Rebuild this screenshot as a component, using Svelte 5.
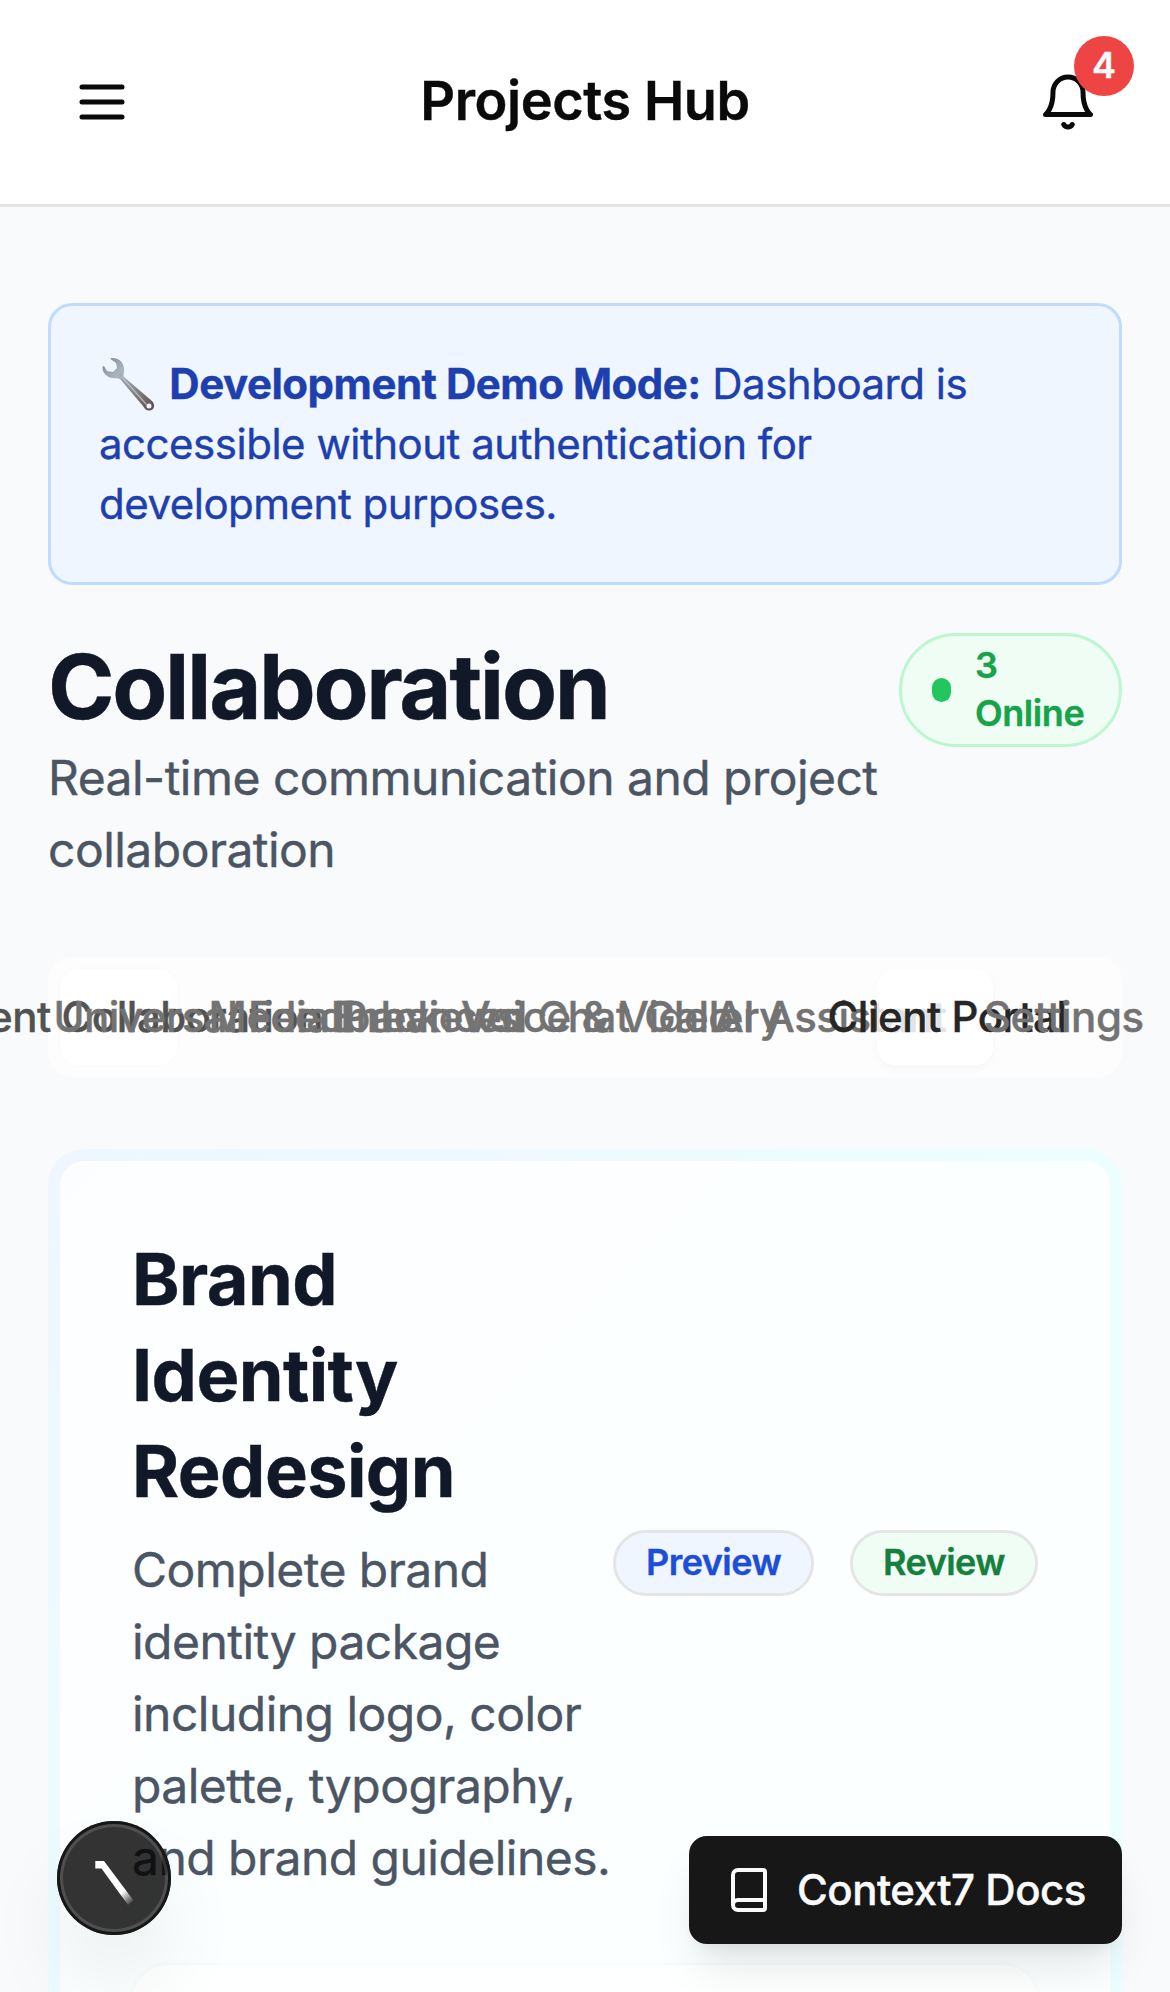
<script>
  const tabs = [
    { label: 'Client Collaboration', state: 'fading' },
    { label: 'Universal Feedback' },
    { label: 'Media Previews' },
    { label: 'Enhanced Chat' },
    { label: 'Voice & Video' },
    { label: 'Gallery' },
    { label: 'AI Assistant' },
    { label: 'Client Portal', state: 'active' },
    { label: 'Settings' },
  ];
</script>

<div class="app">
  <header>
    <button class="icon-btn" aria-label="Menu">
      <svg viewBox="0 0 24 24"><path d="M4 6h16M4 12h16M4 18h16" /></svg>
    </button>
    <h1>Projects Hub</h1>
    <button class="icon-btn" aria-label="Notifications">
      <svg viewBox="0 0 24 24">
        <path d="M6 8a6 6 0 0 1 12 0c0 7 3 9 3 9H3s3-2 3-9" />
        <path d="M10.3 21a1.94 1.94 0 0 0 3.4 0" />
      </svg>
      <span class="count">4</span>
    </button>
  </header>

  <main>
    <section class="notice">
      <svg class="wrench" viewBox="0 0 54 54">
        <defs>
          <linearGradient id="steel" x1="0" y1="0" x2="1" y2="1">
            <stop offset="0" stop-color="#78858f" />
            <stop offset=".3" stop-color="#a9b6bf" />
            <stop offset=".65" stop-color="#827f83" />
            <stop offset="1" stop-color="#5b4a4b" />
          </linearGradient>
        </defs>
        <path
          fill="url(#steel)"
          fill-rule="evenodd"
          d="M9 1C17 0 23 6 22 14C21.700 17 21 18 22 20L50 44C54 48 52 54 47 53.500C44 53.500 43 52 41 49L18 22C16 20.500 14 22 10 21C4 20 0 15 .5 9.500L2 9L5 14L11 15L15 11L14 6L8.500 2ZM47 46.500A2.500 2.500 0 1 0 47 51.500A2.500 2.500 0 1 0 47 46.500Z"
        />
        <path d="M20 20L44 47" stroke="#c3ccd1" stroke-width="1.600" opacity=".7" />
      </svg>
      <strong>Development Demo Mode:</strong> Dashboard is accessible without authentication for
      development purposes.
    </section>

    <section class="intro">
      <div class="intro-text">
        <h2>Collaboration</h2>
        <p>Real-time communication and project collaboration</p>
      </div>
      <div class="online"><i></i><span>3 Online</span></div>
    </section>

    <nav>
      {#each tabs as tab}
        <button class="tab {tab.state ?? ''}"><span>{tab.label}</span></button>
      {/each}
    </nav>

    <section class="card">
      <div class="card-body">
        <div class="project">
          <div class="project-text">
            <h3>Brand Identity Redesign</h3>
            <p>
              Complete brand identity package including logo, color palette, typography, and brand
              guidelines.
            </p>
          </div>
          <div class="badges">
            <span class="badge blue">Preview</span>
            <span class="badge green">Review</span>
          </div>
        </div>
        <div class="panel"></div>
      </div>
    </section>
  </main>

  <div class="dev">
    <svg viewBox="0 0 114 114">
      <defs>
        <linearGradient id="slash" gradientUnits="userSpaceOnUse" x1="56" y1="62" x2="74" y2="84">
          <stop offset="0" stop-color="#fff" />
          <stop offset=".45" stop-color="#fff" />
          <stop offset="1" stop-color="#fff" stop-opacity="0" />
        </linearGradient>
      </defs>
      <path fill="url(#slash)" d="M38.300 40H47L76.500 79.500L71 84L44.500 47.500H38.300Z" />
    </svg>
  </div>

  <button class="docs">
    <svg viewBox="0 0 24 24">
      <path
        d="M4 19.500v-15A2.500 2.500 0 0 1 6.500 2H19a1 1 0 0 1 1 1v18a1 1 0 0 1-1 1H6.500a1 1 0 0 1 0-5H20"
      />
    </svg>
    Context7 Docs
  </button>
</div>

<style>
  :global(body) {
    margin: 0;
  }
  .app,
  .app * {
    box-sizing: border-box;
  }
  .app {
    position: relative;
    height: 1992px;
    overflow: hidden;
    background: #f9fafc;
    font-family: Inter, sans-serif;
    font-size: 48px;
    line-height: 72px;
    letter-spacing: -0.011em;
    color: #0a0a0a;
    -webkit-text-stroke: 0.4px;
  }
  h1,
  h2,
  h3,
  p {
    margin: 0;
  }
  p {
    letter-spacing: -0.011em;
  }
  .tab,
  .notice,
  .docs,
  .online {
    letter-spacing: -0.0116em;
  }
  button {
    padding: 0;
    border: 0;
    background: none;
    font: inherit;
    color: inherit;
  }
  svg {
    fill: none;
    stroke: currentColor;
    stroke-width: 2;
    stroke-linecap: round;
    stroke-linejoin: round;
    flex: none;
  }
  header {
    display: flex;
    align-items: center;
    justify-content: space-between;
    height: 207px;
    padding: 0 48px;
    border-bottom: 3px solid #e5e5e5;
    background: #fff;
  }
  h1 {
    padding-bottom: 2px;
    font-size: 54px;
    font-weight: 600;
    line-height: 84px;
    letter-spacing: -0.400px;
  }
  .icon-btn {
    position: relative;
    display: grid;
    place-items: center;
    width: 108px;
    height: 108px;
  }
  .icon-btn svg {
    width: 60px;
    height: 60px;
  }
  .count {
    position: absolute;
    top: -12px;
    right: -12px;
    width: 60px;
    height: 60px;
    border-radius: 50%;
    background: #ef4444;
    color: #fafafa;
    font-size: 36px;
    font-weight: 600;
    line-height: 58px;
    text-align: center;
  }
  main {
    padding: 96px 48px 0;
  }
  .notice {
    padding: 48px;
    border: 3px solid #bfdbfe;
    border-radius: 24px;
    background: #eff6ff;
    color: #1e40af;
    font-size: 42px;
    line-height: 60px;
  }
  .wrench {
    width: 54px;
    height: 54px;
    margin: -10px 2px -10px 3px;
    stroke: none;
    vertical-align: -2px;
  }
  .notice strong {
    font-weight: 700;
  }
  .intro {
    display: flex;
    justify-content: space-between;
    align-items: flex-start;
    margin-top: 48px;
  }
  .intro-text {
    width: 851px;
  }
  .intro-text p {
    padding-top: 1px;
  }
  h2 {
    font-size: 90px;
    font-weight: 700;
    line-height: 108px;
    letter-spacing: -2.350px;
    color: #111827;
  }
  p {
    color: #4b5563;
  }
  .online {
    display: flex;
    align-items: center;
    gap: 24px;
    width: 223px;
    height: 114px;
    padding: 6px 30px;
    border: 3px solid #bbf7d0;
    border-radius: 57px;
    background: #f0fdf4;
    color: #16a34a;
    font-size: 36px;
    font-weight: 600;
    line-height: 48px;
  }
  .online span {
    padding-bottom: 2px;
  }
  .online i {
    flex: none;
    width: 19px;
    height: 24px;
    border-radius: 12px;
    background: #22c55e;
  }
  nav {
    display: grid;
    grid-template-columns: repeat(9, minmax(0, 1fr));
    height: 120px;
    margin-top: 71px;
    padding: 12px;
    border-radius: 24px;
    background: #fdfdfd;
    color: #737373;
  }
  .tab {
    display: flex;
    align-items: center;
    justify-content: center;
    border-radius: 18px;
    font-size: 42px;
    font-weight: 500;
    line-height: 60px;
    white-space: nowrap;
  }
  .tab span {
    flex: none;
    margin-left: 24px;
  }
  .fading {
    background: #fff;
    color: #525252;
    box-shadow: 0 0 6px rgba(0, 0, 0, 0.02);
  }
  .active {
    background: rgba(255, 255, 255, 0.8);
    color: #262626;
    box-shadow: 0 3px 9px rgba(0, 0, 0, 0.03);
  }
  .card {
    height: 1000px;
    margin-top: 72px;
    padding: 12px;
    border-radius: 36px;
    background: linear-gradient(135deg, #eff6ff, #ecfeff 50%, #ecfeff);
  }
  .card-body {
    height: 100%;
    padding: 72px;
    border-radius: 24px;
    background: rgba(255, 255, 255, 0.8);
  }
  .project {
    display: flex;
    align-items: center;
    justify-content: space-between;
  }
  .project-text {
    width: 480px;
  }
  h3 {
    width: 400px;
    margin-top: -2px;
    font-size: 72px;
    font-weight: 700;
    line-height: 96px;
    letter-spacing: -0.600px;
    color: #111827;
  }
  .project-text p {
    width: 484px;
    margin-top: 15px;
    margin-bottom: -1px;
  }
  .badges {
    display: flex;
    gap: 36px;
  }
  .badge {
    height: 66px;
    padding: 6px 30px;
    border: 3px solid #e5e5e5;
    border-radius: 33px;
    font-size: 36px;
    font-weight: 600;
    line-height: 46px;
    letter-spacing: -0.015em;
  }
  .blue {
    background: #eff6ff;
    color: #1d4ed8;
  }
  .green {
    background: #f0fdf4;
    color: #15803d;
  }
  .panel {
    height: 200px;
    margin-top: 72px;
    border-radius: 36px;
    background: rgba(255, 255, 255, 0.8);
    box-shadow: 0 0 6px rgba(0, 0, 0, 0.04);
  }
  .dev {
    position: absolute;
    left: 57px;
    top: 1821px;
    width: 114px;
    height: 114px;
    border-radius: 50%;
    background: rgba(0, 0, 0, 0.8);
    box-shadow:
      inset 0 0 0 3px #171717,
      inset 0 0 0 6px rgba(255, 255, 255, 0.14),
      0 48px 96px -24px rgba(0, 0, 0, 0.2);
  }
  .dev svg {
    display: block;
    stroke: none;
  }
  .docs {
    position: absolute;
    right: 48px;
    bottom: 48px;
    display: flex;
    align-items: center;
    gap: 24px;
    width: 433px;
    height: 108px;
    padding: 0 36px;
    border-radius: 18px;
    background: #171717;
    color: #fafafa;
    font-size: 42px;
    font-weight: 500;
    white-space: nowrap;
    box-shadow:
      0 30px 45px -9px rgba(0, 0, 0, 0.1),
      0 12px 18px -12px rgba(0, 0, 0, 0.1);
  }
  .docs svg {
    width: 48px;
    height: 48px;
  }
</style>
